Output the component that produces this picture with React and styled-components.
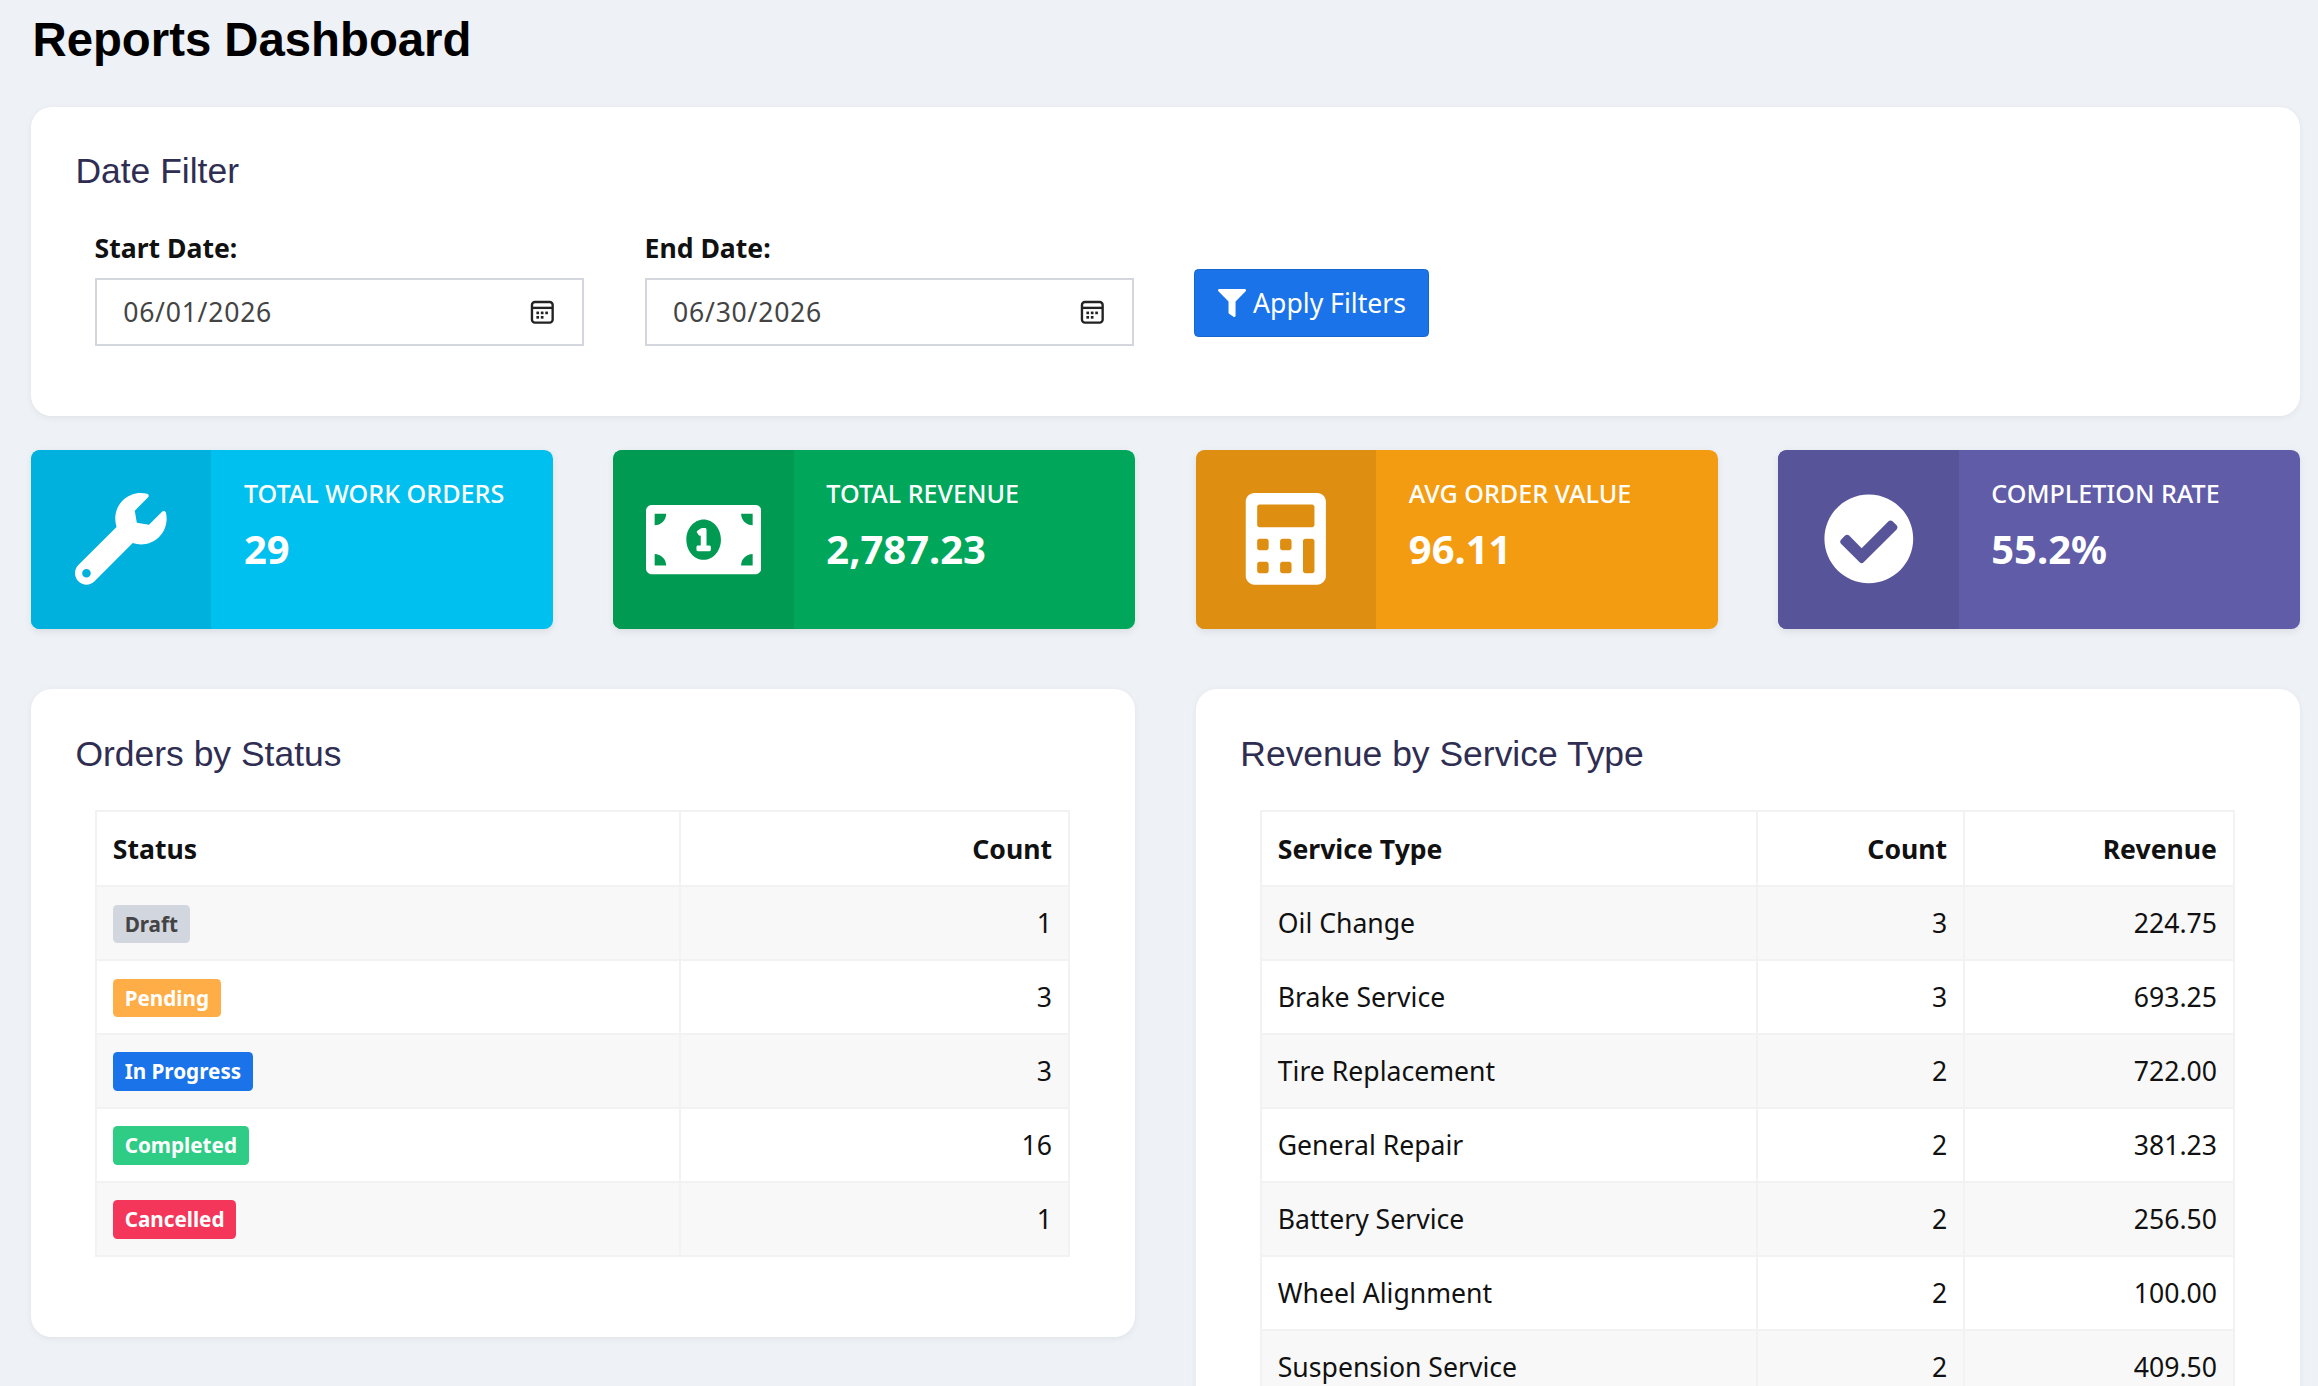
import React from "react";
import styled, { createGlobalStyle } from "styled-components";
import { FaWrench, FaMoneyBillAlt, FaCalculator, FaCheckCircle, FaFilter } from "react-icons/fa";

const Global = createGlobalStyle`
  html { zoom: 1.4783; }
  body { margin: 0; background: #eef1f6; font-family: "Noto Sans", "Open Sans", sans-serif; color: #222; }
  * { box-sizing: border-box; }
`;

const Page = styled.div`
  padding: 0 12px 40px 21px;
  min-height: 938px;
  overflow: hidden;
`;
const Title = styled.h1`
  font-family: "Liberation Sans", Arial, sans-serif;
  font-size: 32px; font-weight: bold; margin: 8px 0 27px 1px; color: #000;
`;
const Card = styled.div`
  background: #fff; border-radius: 14px;
  box-shadow: 0 1px 4px rgba(0,0,0,0.06);
  padding: 27px 44px ${p => p.$pb || 30}px 30px;
`;
const CardTitle = styled.h2`
  font-family: "Liberation Sans", Arial, sans-serif;
  font-weight: normal; font-size: 24px; color: #2f2e52; margin: 3px 0 ${p => p.$mb || 24}px 0;
`;
const FilterRow = styled.div`
  display: flex; align-items: flex-end; gap: 41px; padding-left: 13px;
`;
const Field = styled.div`
  display: flex; flex-direction: column; gap: 8px;
`;
const Label = styled.label`
  font-weight: bold; font-size: 18px; color: #111;
`;
const Input = styled.div`
  width: 331px; height: 46px; border: 2px solid #d3d6dc;
  display: flex; align-items: center; justify-content: space-between;
  padding: 0 18px; font-size: 18px; color: #444; letter-spacing: 0.5px;
`;
const Button = styled.button`
  height: 46px; margin-bottom: 6px; padding: 0 15px; background: #1a73e8; color: #fff;
  border: 1px solid #1666d0; border-radius: 3px; font-family: inherit; font-size: 18px;
  display: flex; align-items: center; gap: 5px;
`;
const Stats = styled.div`
  display: grid; grid-template-columns: repeat(4, 1fr); gap: 41px; margin: 23px 0 41px;
`;
const Stat = styled.div`
  display: flex; height: 121px; border-radius: 6px; overflow: hidden; background: ${p => p.$bg};
  box-shadow: 0 2px 5px rgba(0,0,0,0.08); color: #fff;
`;
const StatIcon = styled.div`
  width: 122px; background: ${p => p.$bg}; display: flex; align-items: center; justify-content: center;
  font-size: ${p => p.$size || 62}px;
`;
const StatBody = styled.div`
  padding: 18px 22px; display: flex; flex-direction: column; gap: 7px;
`;
const StatLabel = styled.div`font-size: 17px; font-weight: 500;`;
const StatValue = styled.div`font-size: 27px; font-weight: bold;`;
const Bottom = styled.div`
  display: grid; grid-template-columns: 1fr 1fr; gap: 41px; align-items: start;
`;
const Table = styled.table`
  border-collapse: collapse; width: calc(100% - 13px); margin-left: 13px; font-size: 18px;
  border: 1px solid #f2f2f2;
  th, td { padding: 0 11px; height: 50px; border: 2px solid #f2f2f2; text-align: left; color: #111; }
  th { font-weight: bold; height: 51px; }
  tbody tr:nth-child(odd) td { background: #f8f8f8; }
  th.r, td.r { text-align: right; }
`;
const Badge = styled.span`
  display: inline-block; background: ${p => p.$bg}; color: ${p => p.$fg || "#fff"};
  font-size: 14px; font-weight: bold; padding: 2px 8px; border-radius: 3px; line-height: 22px;
`;

const Cal = () => (
  <svg width="18" height="18" viewBox="0 0 18 18" fill="none" stroke="#222" strokeWidth="1.6">
    <rect x="2" y="2" width="14" height="14" rx="2" />
    <line x1="2" y1="6" x2="16" y2="6" />
    <g fill="#222" stroke="none">
      <rect x="5" y="8.5" width="1.8" height="1.8" /><rect x="8" y="8.5" width="1.8" height="1.8" /><rect x="11" y="8.5" width="1.8" height="1.8" />
      <rect x="5" y="11.5" width="1.8" height="1.8" /><rect x="8" y="11.5" width="1.8" height="1.8" />
    </g>
  </svg>
);

const statuses = [
  ["Draft", "#d2d6de", 1, "#444"],
  ["Pending", "#ffad46", 3],
  ["In Progress", "#1a73e8", 3],
  ["Completed", "#2ecc85", 16],
  ["Cancelled", "#f4365a", 1],
];
const services = [
  ["Oil Change", 3, "224.75"],
  ["Brake Service", 3, "693.25"],
  ["Tire Replacement", 2, "722.00"],
  ["General Repair", 2, "381.23"],
  ["Battery Service", 2, "256.50"],
  ["Wheel Alignment", 2, "100.00"],
  ["Suspension Service", 2, "409.50"],
];

export default function App() {
  return (
    <Page>
      <Global />
      <Title>Reports Dashboard</Title>
      <Card $pb={47}>
        <CardTitle $mb={26}>Date Filter</CardTitle>
        <FilterRow>
          <Field><Label>Start Date:</Label><Input>06/01/2026<Cal /></Input></Field>
          <Field><Label>End Date:</Label><Input>06/30/2026<Cal /></Input></Field>
          <Button><FaFilter size={19} />Apply Filters</Button>
        </FilterRow>
      </Card>
      <Stats>
        <Stat $bg="#00c0ef"><StatIcon $bg="#00b0dd"><FaWrench /></StatIcon>
          <StatBody><StatLabel>TOTAL WORK ORDERS</StatLabel><StatValue>29</StatValue></StatBody></Stat>
        <Stat $bg="#00a65a"><StatIcon $bg="#009a52" $size={78}><FaMoneyBillAlt /></StatIcon>
          <StatBody><StatLabel>TOTAL REVENUE</StatLabel><StatValue>2,787.23</StatValue></StatBody></Stat>
        <Stat $bg="#f39c12"><StatIcon $bg="#de8e10"><FaCalculator /></StatIcon>
          <StatBody><StatLabel>AVG ORDER VALUE</StatLabel><StatValue>96.11</StatValue></StatBody></Stat>
        <Stat $bg="#605ca8"><StatIcon $bg="#57549a"><FaCheckCircle /></StatIcon>
          <StatBody><StatLabel>COMPLETION RATE</StatLabel><StatValue>55.2%</StatValue></StatBody></Stat>
      </Stats>
      <Bottom>
        <Card $pb={54}>
          <CardTitle>Orders by Status</CardTitle>
          <Table>
            <thead><tr><th style={{ width: "60%" }}>Status</th><th className="r">Count</th></tr></thead>
            <tbody>
              {statuses.map(([n, c, v, fg]) => (
                <tr key={n}><td><Badge $bg={c} $fg={fg}>{n}</Badge></td><td className="r">{v}</td></tr>
              ))}
            </tbody>
          </Table>
        </Card>
        <Card>
          <CardTitle>Revenue by Service Type</CardTitle>
          <Table>
            <thead><tr><th style={{ width: "51%" }}>Service Type</th><th className="r">Count</th><th className="r">Revenue</th></tr></thead>
            <tbody>
              {services.map(([n, c, r]) => (
                <tr key={n}><td>{n}</td><td className="r">{c}</td><td className="r">{r}</td></tr>
              ))}
            </tbody>
          </Table>
        </Card>
      </Bottom>
    </Page>
  );
}
